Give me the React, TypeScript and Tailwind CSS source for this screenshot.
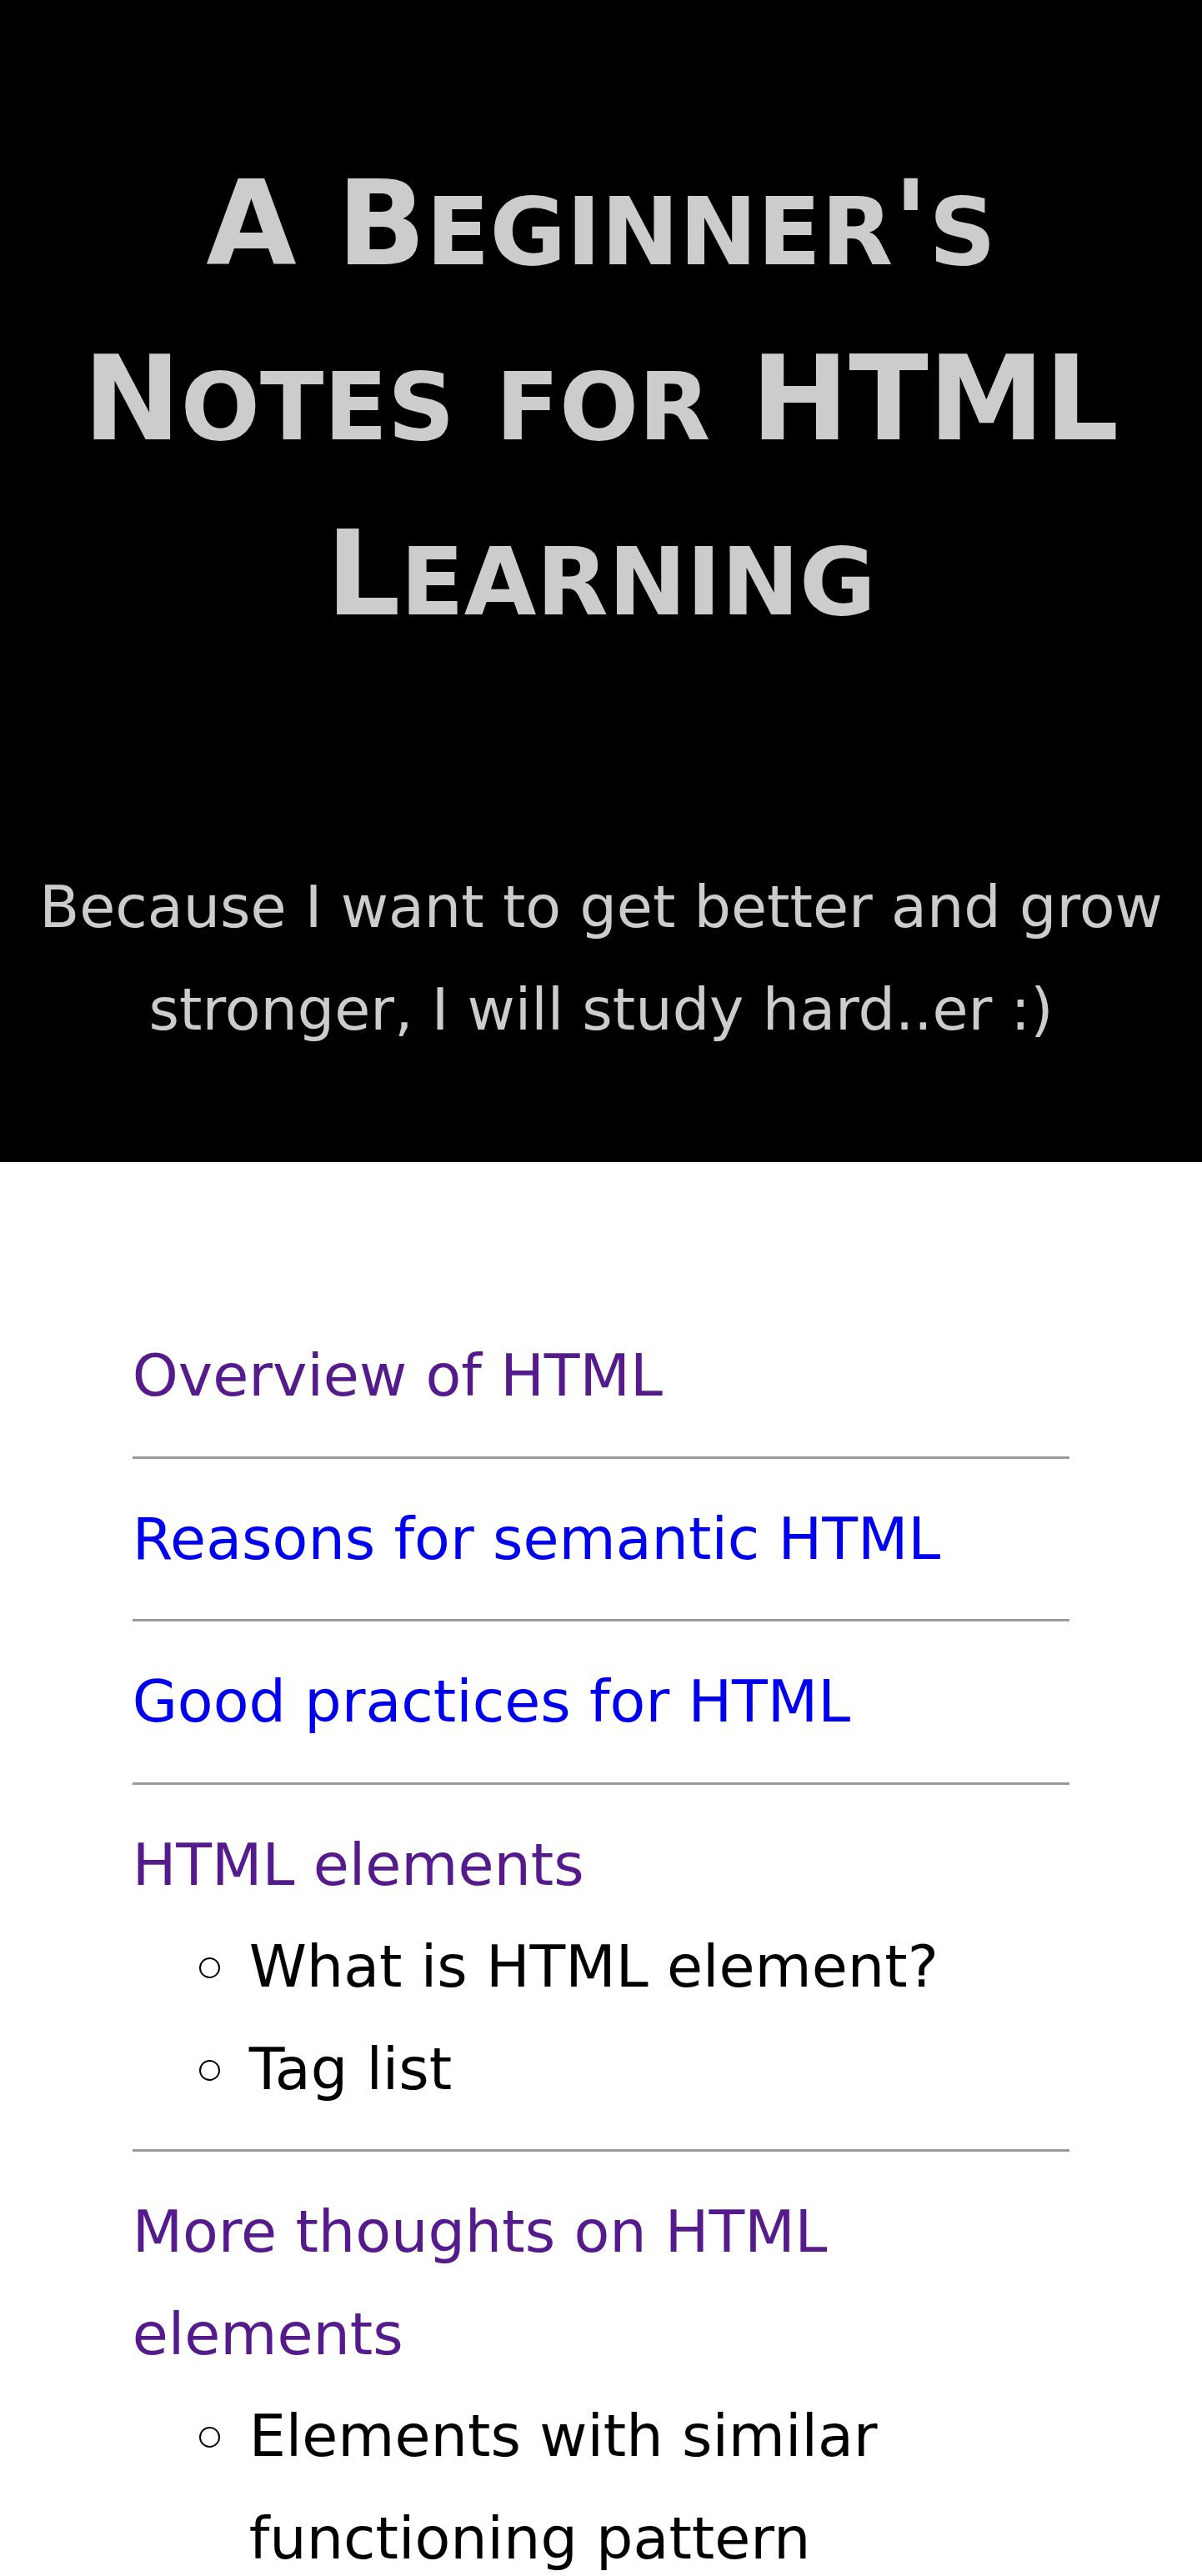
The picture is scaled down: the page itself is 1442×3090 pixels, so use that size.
const topics = [
  { title: "Overview of HTML", visited: true, subs: [] as string[] },
  { title: "Reasons for semantic HTML", visited: false, subs: [] as string[] },
  { title: "Good practices for HTML", visited: false, subs: [] as string[] },
  {
    title: "HTML elements",
    visited: true,
    subs: ["What is HTML element?", "Tag list"],
  },
  {
    title: "More thoughts on HTML elements",
    visited: true,
    subs: ["Elements with similar functioning pattern"],
  },
];

// small caps at 0.8 of the capital size
function Sc({ children }: { children: string }) {
  return <span className="text-[0.8em] uppercase">{children}</span>;
}

export default function App() {
  return (
    <div className="min-h-screen bg-white font-['DejaVu_Sans',sans-serif]">
      <header className="bg-black px-[44px] pt-[164px] pb-[122px] text-center text-[#cccccc]">
        <h1 className="mx-auto max-w-[1300px] text-[140px] font-bold leading-[1.5]">
          <span>A</span>{" "}
          <span>
            B<Sc>eginner</Sc>'<Sc>s</Sc>
          </span>{" "}
          <span>
            N<Sc>otes</Sc>
          </span>{" "}
          <Sc>for</Sc> <span>HTML</span>{" "}
          <span>
            L<Sc>earning</Sc>
          </span>
        </h1>
        <p className="mt-[233px] text-[70px] leading-[1.75]">
          Because I want to get better and grow stronger, I will study hard..er :)
        </p>
      </header>

      <main className="pt-[160px]">
        <ul className="mx-auto w-[78%]">
          {topics.map((t) => (
            <li
              key={t.title}
              className="border-b-[3px] border-[#9a9a9a] py-[35px] text-[70px] leading-[1.75]"
            >
              <a
                href="#"
                className={t.visited ? "text-[#551a8b]" : "text-[#0000ee]"}
              >
                {t.title}
              </a>
              {t.subs.length > 0 && (
                <ul className="pl-[140px] text-black">
                  {t.subs.map((s) => (
                    <li
                      key={s}
                      className="relative before:absolute before:left-[-60px] before:top-[50px] before:h-[25px] before:w-[25px] before:rounded-full before:border-2 before:border-black before:content-['']"
                    >
                      {s}
                    </li>
                  ))}
                </ul>
              )}
            </li>
          ))}
        </ul>
      </main>
    </div>
  );
}
